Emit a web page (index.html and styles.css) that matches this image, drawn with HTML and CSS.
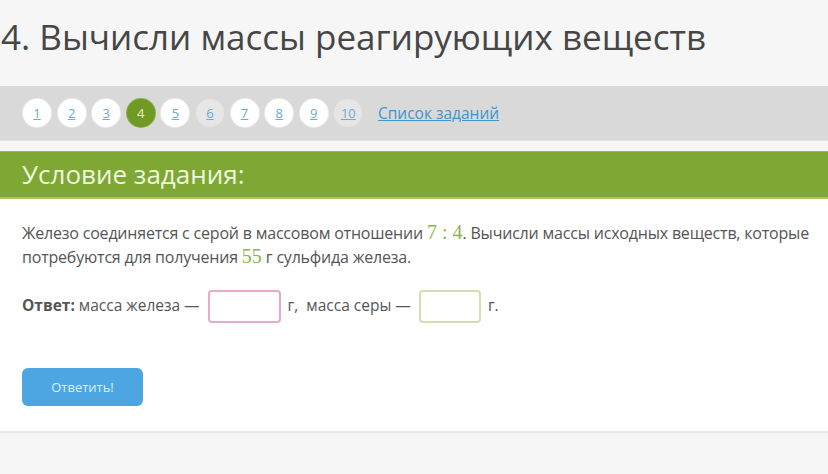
FILE: index.html
```html
<!DOCTYPE html>
<html lang="ru">
<head>
<meta charset="utf-8">
<link rel="stylesheet" href="styles.css">
</head>
<body>
<div class="page">
  <h1 class="title">4. Вычисли массы реагирующих веществ</h1>
  <nav class="tasks">
    <a class="num">1</a>
    <a class="num">2</a>
    <a class="num">3</a>
    <a class="num current">4</a>
    <a class="num">5</a>
    <a class="num visited">6</a>
    <a class="num">7</a>
    <a class="num">8</a>
    <a class="num">9</a>
    <a class="num visited">10</a>
    <a class="list">Список заданий</a>
  </nav>
  <section class="task">
    <h2 class="task-head">Условие задания:</h2>
    <div class="task-body">
      <p class="cond">Железо соединяется с серой в массовом отношении <span class="m">7 : 4</span>. Вычисли массы исходных веществ, которые<br>потребуются для получения <span class="m">55</span> г сульфида железа.</p>
      <div class="answer"><b>Ответ:</b> масса железа —<span class="box pink"></span>г,&nbsp; масса серы —<span class="box green"></span>г.</div>
      <button class="submit">Ответить!</button>
    </div>
  </section>
  <div class="footer"></div>
</div>
</body>
</html>
```
FILE: styles.css
```css
html, body {
  margin: 0;
  padding: 0;
  background: #f6f6f6;
}
body {
  font-family: "Open Sans", "Noto Sans", sans-serif;
  color: #555;
  width: 828px;
  height: 474px;
  overflow: hidden;
}
.title {
  margin: 0;
  height: 86px;
  padding: 12px 0 0 1px;
  box-sizing: border-box;
  font-weight: 400;
  font-size: 35px;
  line-height: 50px;
  color: #464646;
}
.tasks {
  height: 54px;
  background: #d9d9d9;
  display: flex;
  align-items: center;
  padding-left: 23px;
  gap: 6.6px;
  border-bottom: 1px solid #e4e4e4;
}
.num {
  width: 28px;
  height: 28px;
  border-radius: 50%;
  background: #fff;
  display: flex;
  align-items: center;
  justify-content: center;
  font-size: 13px;
  color: #6aaad3;
  text-decoration: underline;
  box-shadow: 0 0 0 1px #ececec;
}
.num.visited {
  background: #e6e6e6;
  box-shadow: none;
}
.num.current {
  background: #6e9a25;
  color: #e6f2c8;
  text-decoration: none;
  box-shadow: 0 0 0 1px #8ab34a;
}
.list {
  margin-left: 9px;
  font-size: 15.5px;
  color: #3f95cc;
  text-decoration: underline;
}
.task {
  margin-top: 10px;
  background: #fff;
}
.task-head {
  margin: 0;
  height: 48px;
  background: #7ea734;
  border-top: 1px solid #95b85a;
  border-bottom: 2px solid #a9c86c;
  box-sizing: border-box;
  padding-left: 22px;
  font-weight: 400;
  font-size: 26px;
  line-height: 44px;
  color: #eef7dc;
}
.task-body {
  padding: 22px 8px 0 22px;
  height: 234px;
  box-sizing: border-box;
  border-bottom: 2px solid #e6e6e6;
}
.cond {
  margin: 0;
  font-size: 16px;
  line-height: 24px;
  color: #555;
  letter-spacing: -0.2px;
  white-space: nowrap;
}
.m {
  font-family: "Liberation Serif", "DejaVu Serif", serif;
  font-size: 20px;
  line-height: 1;
  color: #8ab44a;
  letter-spacing: 0;
}
.answer {
  margin-top: 20px;
  font-size: 15.5px;
  line-height: 33px;
  height: 33px;
  color: #555;
}
.answer b {
  font-weight: 700;
}
.box {
  display: inline-block;
  vertical-align: middle;
  width: 73px;
  height: 33px;
  border-radius: 4px;
  box-sizing: border-box;
  margin: 0 7px 0 8px;
}
.box.pink {
  border: 2px solid #e6aacb;
}
.box.green {
  width: 62px;
  border: 2px solid #d2dfae;
}
.submit {
  margin-top: 46px;
  width: 121px;
  height: 38px;
  border: none;
  border-radius: 6px;
  background: #4da6e2;
  color: #d9f0ff;
  font-family: "Open Sans", sans-serif;
  font-size: 13px;
  display: block;
  padding: 0;
}
.footer {
  height: 40px;
}
```
